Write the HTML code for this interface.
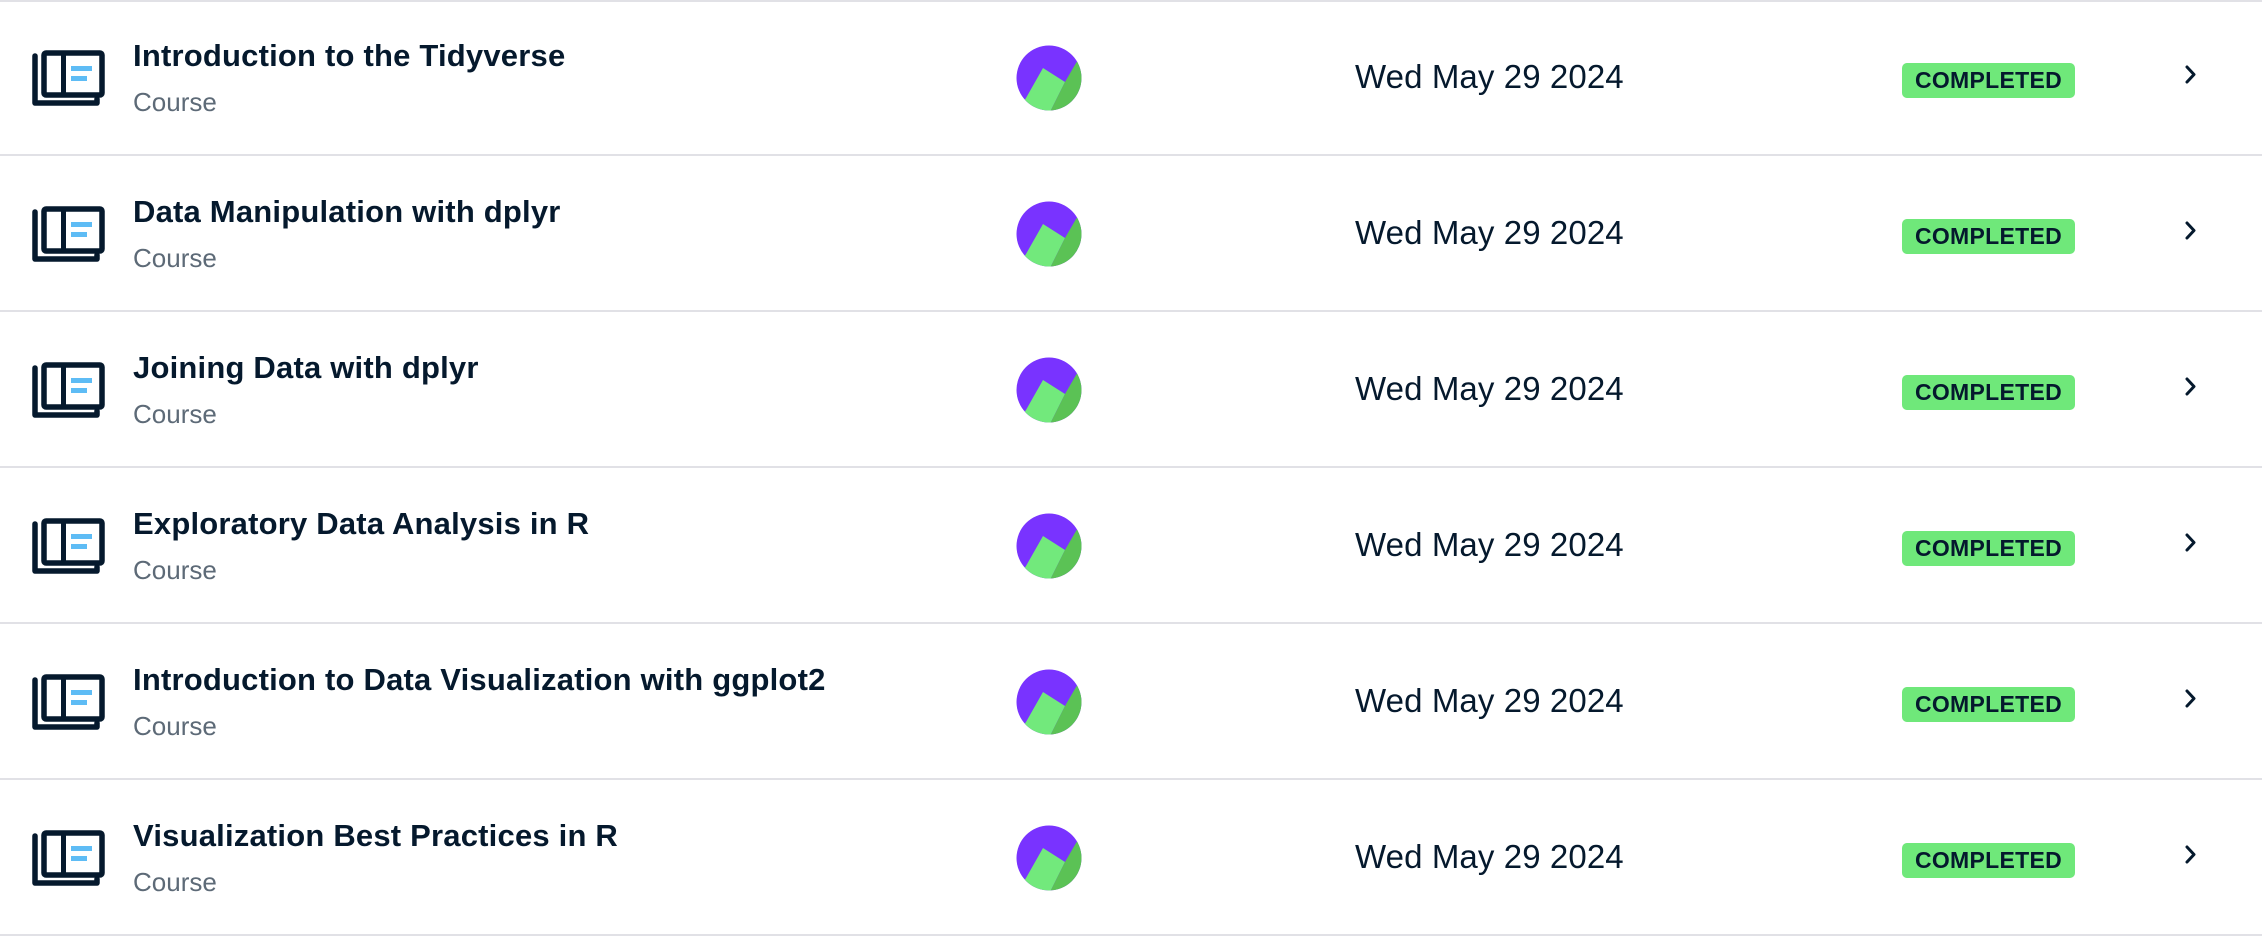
<!DOCTYPE html>
<html><head><style>
body{margin:0;width:2262px;height:934px;background:#fff;font-family:"Liberation Sans",sans-serif;color:#05192d;overflow:hidden;position:relative}
.row{position:absolute;left:0;width:2262px;height:154px;border-bottom:2px solid #e1e1e6}
.icon{position:absolute;left:30px;top:48px}
.t{position:absolute;left:133px;top:38px;font-size:31px;font-weight:bold;letter-spacing:0.2px}
.c{position:absolute;left:133px;top:87px;font-size:26px;color:#5d6a77}
.logo{position:absolute;left:1016px;top:45px}
.d{position:absolute;left:1355px;top:58px;font-size:33px;letter-spacing:0.1px}
.b{position:absolute;left:1902px;top:63px;width:173px;height:35px;background:#6fe87a;border-radius:5px;font-size:23px;font-weight:bold;text-align:center;line-height:35px;letter-spacing:0.3px}
.ch{position:absolute;left:2180px;top:62px}
.top{position:absolute;left:0;top:0;width:2262px;height:2px;background:#e1e1e6}
</style></head><body>
<div class="top"></div>
<div id="rows"></div>
<script>
var titles=["Introduction to the Tidyverse","Data Manipulation with dplyr","Joining Data with dplyr","Exploratory Data Analysis in R","Introduction to Data Visualization with ggplot2","Visualization Best Practices in R"];
var h="";
titles.forEach(function(t,i){
h+='<div class="row" style="top:'+(i*156)+'px">'+
'<svg class="icon" width="76" height="62" viewBox="0 0 76 62"><path d="M5 8V55H67V51" fill="none" stroke="#05192d" stroke-width="5.5" stroke-linecap="round" stroke-linejoin="round"/><rect x="14" y="5" width="58" height="42" rx="2" fill="none" stroke="#05192d" stroke-width="5.5"/><rect x="31" y="5" width="5" height="42" fill="#05192d"/><rect x="41" y="18" width="21" height="5" fill="#5ebcf5"/><rect x="41" y="28" width="16" height="5" fill="#5ebcf5"/></svg>'+
'<div class="t">'+t+'</div><div class="c">Course</div>'+
'<svg class="logo" width="66" height="66" viewBox="0 0 66 66"><defs><clipPath id="k'+i+'"><circle cx="33" cy="33" r="32.5"/></clipPath></defs><g clip-path="url(#k'+i+')"><rect width="66" height="66" fill="#7933ff"/><polygon points="10,53 27,23 49,37 34,67 0,67" fill="#72e97c"/><polygon points="49,37 60,18 66,10 66,67 34,67" fill="#5bc255"/></g></svg>'+
'<div class="d">Wed May 29 2024</div><div class="b">COMPLETED</div>'+
'<svg class="ch" width="20" height="26" viewBox="0 0 20 26"><path d="M7 5L14 12.5L7 20" fill="none" stroke="#05192d" stroke-width="3" stroke-linecap="round" stroke-linejoin="round"/></svg>'+
'</div>';});
document.getElementById("rows").innerHTML=h;
</script>
</body></html>
